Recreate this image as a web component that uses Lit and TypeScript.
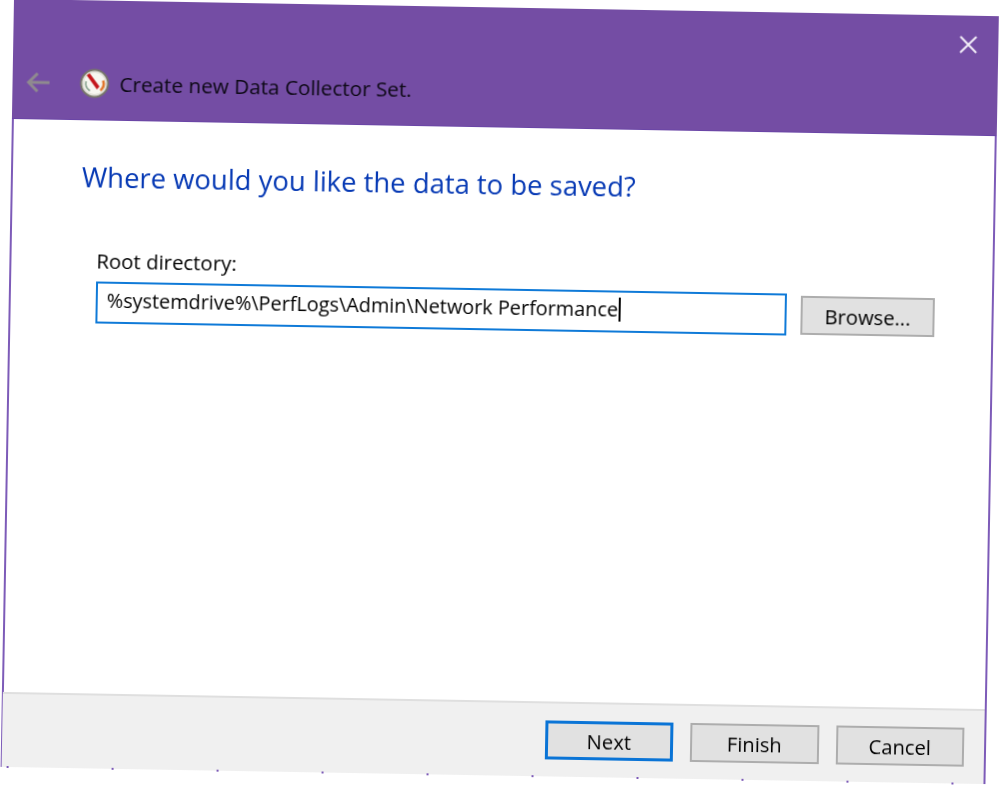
import { LitElement, html, css } from "lit";
import { customElement } from "lit/decorators.js";

@customElement("app-root")
export class AppRoot extends LitElement {
  static styles = css`
    :host { display: block; width: 1000px; height: 787px; overflow: hidden; background: #fff; font-family: "Open Sans", "Noto Sans", sans-serif; color: #000; }
    .dialog {
      box-sizing: border-box; width: 985px; height: 768px; margin: -1px 0 0 13.5px;
      transform: rotate(1deg); transform-origin: 0 0; filter: blur(0.3px);
      display: flex; flex-direction: column; background: #fff;
      border-left: 2px solid #7d5bb8; border-right: 2px solid #7d5bb8;
    }
    .header { height: 120px; flex: none; background: #744da4; margin: 0 -2px; display: flex; flex-direction: column; border-bottom: 1px solid #6a45a6; box-sizing: border-box; }
    .close-row { display: flex; justify-content: flex-end; padding: 19px 20px 0 0; height: 18px; }
    .close { width: 20px; height: 20px; }
    .nav { display: flex; align-items: center; margin-top: 30px; padding-left: 14px; height: 32px; }
    .back { width: 24px; height: 22px; }
    .gauge { width: 30px; height: 30px; margin-left: 29px; }
    .title { margin-left: 10px; font-size: 20.7px; line-height: 32px; white-space: nowrap; color: #0c0814; }
    .content { flex: 1; min-height: 0; padding: 39px 0 0 69px; }
    h1 { margin: 0; font-size: 27.45px; line-height: 36px; font-weight: 400; color: #0538b4; white-space: nowrap; }
    .label { margin: 51px 0 0 16px; font-size: 20.4px; line-height: 28px; white-space: nowrap; }
    .path-row { display: flex; align-items: flex-start; margin: 7px 0 0 16px; }
    .input { box-sizing: border-box; width: 691px; height: 42px; border: 2px solid #0f7ad8; padding: 0 0 0 9px; font-size: 19.85px; line-height: 34px; white-space: nowrap; display: flex; align-items: flex-start; }
    .caret { display: inline-block; width: 2px; height: 24px; background: #000; margin: 5px 0 0 1px; }
    .btn { box-sizing: border-box; width: 134px; height: 39px; border: 2px solid #adadad; background: #e1e1e1; display: flex; align-items: center; justify-content: center; font-size: 20.2px; color: #000; }
    .browse { margin: 2px 0 0 14px; }
    .footer { flex: none; height: 75px; box-sizing: border-box; background: #f0f0f0; border-top: 2px solid #dfdfdf; margin-left: -1px; padding: 17px 20px 0 0; display: flex; justify-content: flex-end; gap: 17px; position: relative; }
    .footer .btn { width: 128.5px; }
    .footer .primary { border: 3px solid #0a74d6; }
    .dots { position: absolute; left: 5px; right: 0; bottom: -1px; height: 2px; background: repeating-linear-gradient(90deg, #7d5bb8 0 2px, transparent 2px 105px); }
  `;

  render() {
    return html`
      <div class="dialog">
        <div class="header">
          <div class="close-row">
            <svg class="close" viewBox="0 0 20 20"><path d="M2 2 L18 18 M18 2 L2 18" stroke="#f4eff8" stroke-width="2" fill="none"/></svg>
          </div>
          <div class="nav">
            <svg class="back" viewBox="0 0 24 22"><path d="M1.5 11 H23 M11 2 L2 11 L11 20" stroke="#8f8a8f" stroke-width="3" fill="none"/></svg>
            <svg class="gauge" viewBox="0 0 30 30">
              <circle cx="15" cy="15" r="13.5" fill="#f7f6f0" stroke="#77766a" stroke-width="2"/>
              <circle cx="15" cy="15" r="11.5" fill="none" stroke="#d4d3c8" stroke-width="1"/>
              <path d="M6.5 13 A9 9 0 0 0 10.5 22.5" stroke="#7c9a85" stroke-width="1.5" fill="none"/>
              <path d="M23.5 12 A9 9 0 0 1 21 22" stroke="#e2762b" stroke-width="2.5" fill="none"/>
              <path d="M7 7 L10 5 L20 18 L17.5 21 Z" fill="#c4161c"/>
            </svg>
            <span class="title">Create new Data Collector Set.</span>
          </div>
        </div>
        <div class="content">
          <h1>Where would you like the data to be saved?</h1>
          <div class="label">Root directory:</div>
          <div class="path-row">
            <div class="input"><span>%systemdrive%\\PerfLogs\\Admin\\Network Performance</span><span class="caret"></span></div>
            <div class="btn browse">Browse...</div>
          </div>
        </div>
        <div class="footer">
          <div class="btn primary">Next</div>
          <div class="btn">Finish</div>
          <div class="btn">Cancel</div>
          <div class="dots"></div>
        </div>
      </div>
    `;
  }
}
